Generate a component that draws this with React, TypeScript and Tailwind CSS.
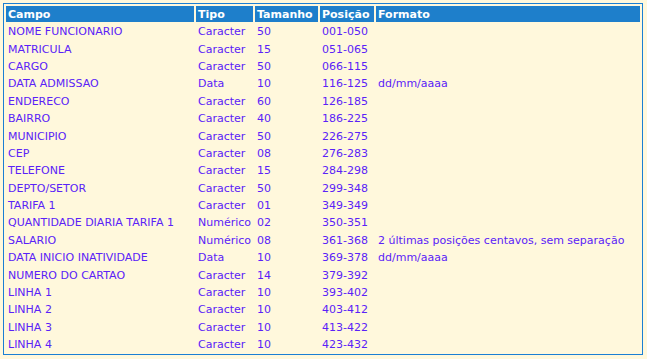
const rows: [string, string, string, string, string][] = [
  ['NOME FUNCIONARIO', 'Caracter', '50', '001-050', ''],
  ['MATRICULA', 'Caracter', '15', '051-065', ''],
  ['CARGO', 'Caracter', '50', '066-115', ''],
  ['DATA ADMISSAO', 'Data', '10', '116-125', 'dd/mm/aaaa'],
  ['ENDERECO', 'Caracter', '60', '126-185', ''],
  ['BAIRRO', 'Caracter', '40', '186-225', ''],
  ['MUNICIPIO', 'Caracter', '50', '226-275', ''],
  ['CEP', 'Caracter', '08', '276-283', ''],
  ['TELEFONE', 'Caracter', '15', '284-298', ''],
  ['DEPTO/SETOR', 'Caracter', '50', '299-348', ''],
  ['TARIFA 1', 'Caracter', '01', '349-349', ''],
  ['QUANTIDADE DIARIA TARIFA 1', 'Numérico', '02', '350-351', ''],
  ['SALARIO', 'Numérico', '08', '361-368', '2 últimas posições centavos, sem separação'],
  ['DATA INICIO INATIVIDADE', 'Data', '10', '369-378', 'dd/mm/aaaa'],
  ['NUMERO DO CARTAO', 'Caracter', '14', '379-392', ''],
  ['LINHA 1', 'Caracter', '10', '393-402', ''],
  ['LINHA 2', 'Caracter', '10', '403-412', ''],
  ['LINHA 3', 'Caracter', '10', '413-422', ''],
  ['LINHA 4', 'Caracter', '10', '423-432', ''],
]

const headers = ['Campo', 'Tipo', 'Tamanho', 'Posição', 'Formato']
const widths = ['w-[188px]', 'w-[57px]', 'w-[63px]', 'w-[54px]', 'w-auto']

export default function App() {
  return (
    <div className="min-h-[359px] w-[647px] bg-[#fff8dc] pl-[3px] pt-[3px] font-['DejaVu_Sans',Verdana,sans-serif] text-[11px]">
      <table className="w-[640px] border-separate border-spacing-[2px] border border-[#1a7fd4]">
        <thead>
          <tr className="h-[16px]">
            {headers.map((h, i) => (
              <th
                key={h}
                className={`${widths[i]} bg-[#1e7fcb] p-0 pl-[2px] pt-[1px] text-left align-middle font-bold leading-[13px] text-white`}
              >
                {h}
              </th>
            ))}
          </tr>
        </thead>
        <tbody>
          {rows.map((r) => (
            <tr key={r[0]} className="h-[15.4px]">
              {r.map((c, i) => (
                <td key={i} className="whitespace-nowrap p-0 pl-[2px] align-middle leading-[13px] text-[#5a22f8]">
                  {c}
                </td>
              ))}
            </tr>
          ))}
        </tbody>
      </table>
    </div>
  )
}
